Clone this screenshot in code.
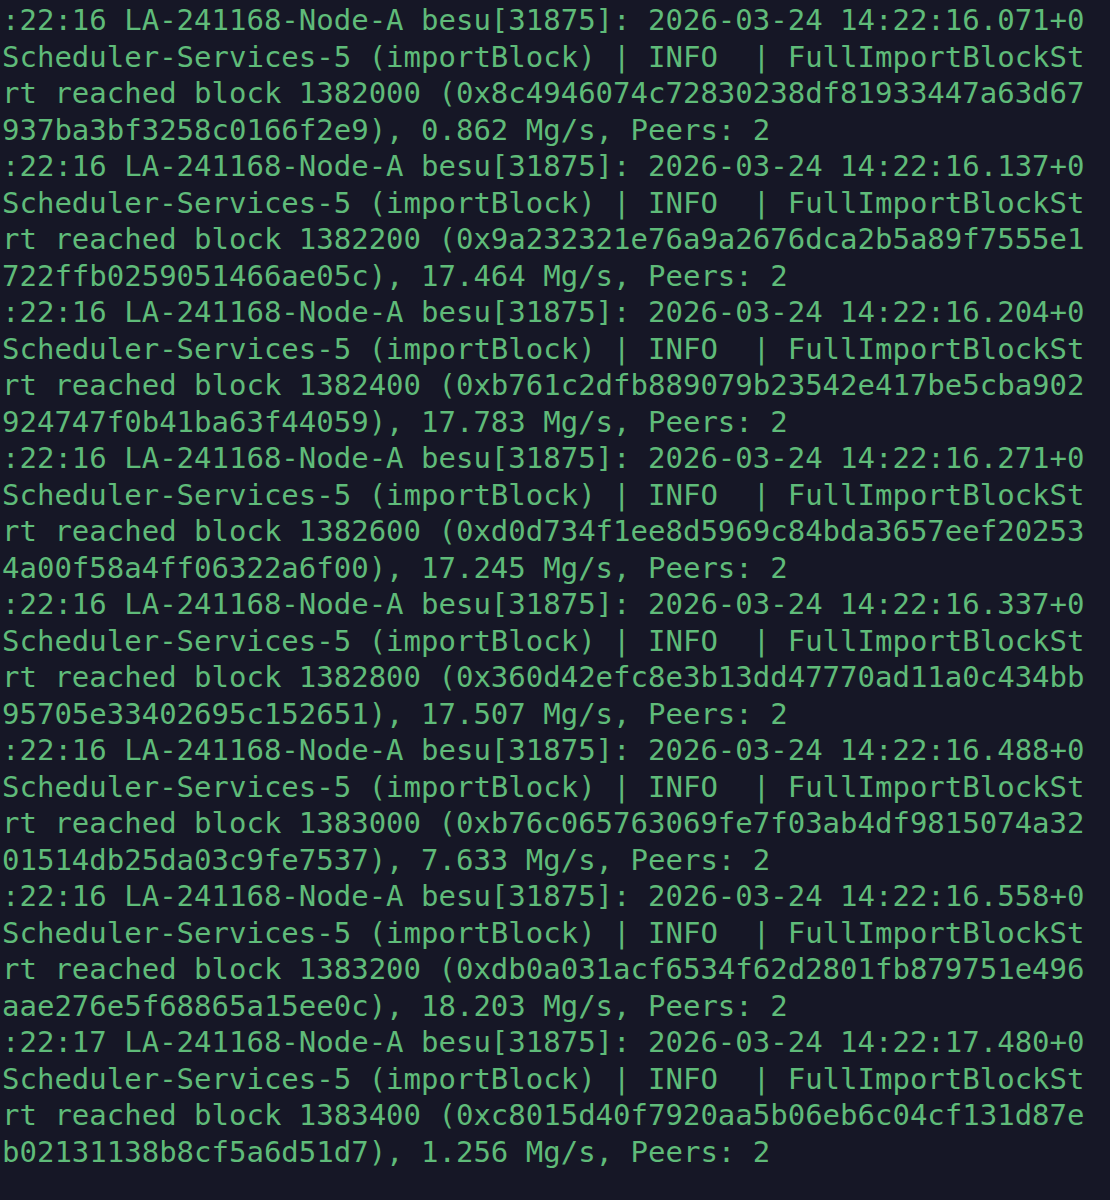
const entries = [
  { ts: "16", time: "16.071", block: "1382000", hash: "0x8c4946074c72830238df81933447a63d67", rest: "937ba3bf3258c0166f2e9), 0.862 Mg/s, Peers: 2" },
  { ts: "16", time: "16.137", block: "1382200", hash: "0x9a232321e76a9a2676dca2b5a89f7555e1", rest: "722ffb0259051466ae05c), 17.464 Mg/s, Peers: 2" },
  { ts: "16", time: "16.204", block: "1382400", hash: "0xb761c2dfb889079b23542e417be5cba902", rest: "924747f0b41ba63f44059), 17.783 Mg/s, Peers: 2" },
  { ts: "16", time: "16.271", block: "1382600", hash: "0xd0d734f1ee8d5969c84bda3657eef20253", rest: "4a00f58a4ff06322a6f00), 17.245 Mg/s, Peers: 2" },
  { ts: "16", time: "16.337", block: "1382800", hash: "0x360d42efc8e3b13dd47770ad11a0c434bb", rest: "95705e33402695c152651), 17.507 Mg/s, Peers: 2" },
  { ts: "16", time: "16.488", block: "1383000", hash: "0xb76c065763069fe7f03ab4df9815074a32", rest: "01514db25da03c9fe7537), 7.633 Mg/s, Peers: 2" },
  { ts: "16", time: "16.558", block: "1383200", hash: "0xdb0a031acf6534f62d2801fb879751e496", rest: "aae276e5f68865a15ee0c), 18.203 Mg/s, Peers: 2" },
  { ts: "17", time: "17.480", block: "1383400", hash: "0xc8015d40f7920aa5b06eb6c04cf131d87e", rest: "b02131138b8cf5a6d51d7), 1.256 Mg/s, Peers: 2" },
];

export default function App() {
  const lines: string[] = [];
  entries.forEach((e) => {
    lines.push(`:22:${e.ts} LA-241168-Node-A besu[31875]: 2026-03-24 14:22:${e.time}+0`);
    lines.push("Scheduler-Services-5 (importBlock) | INFO  | FullImportBlockSt");
    lines.push(`rt reached block ${e.block} (${e.hash}`);
    lines.push(e.rest);
  });

  return (
    <div className="w-[1110px] h-[1200px] overflow-hidden bg-[#161726] text-[#5fbb79]">
      <div className="pl-[2px] mt-[2px] font-['DejaVu_Sans_Mono',monospace] text-[29px] leading-[36.5px] whitespace-pre">
        {lines.map((l, i) => (
          <div key={i}>{l}</div>
        ))}
      </div>
    </div>
  );
}
